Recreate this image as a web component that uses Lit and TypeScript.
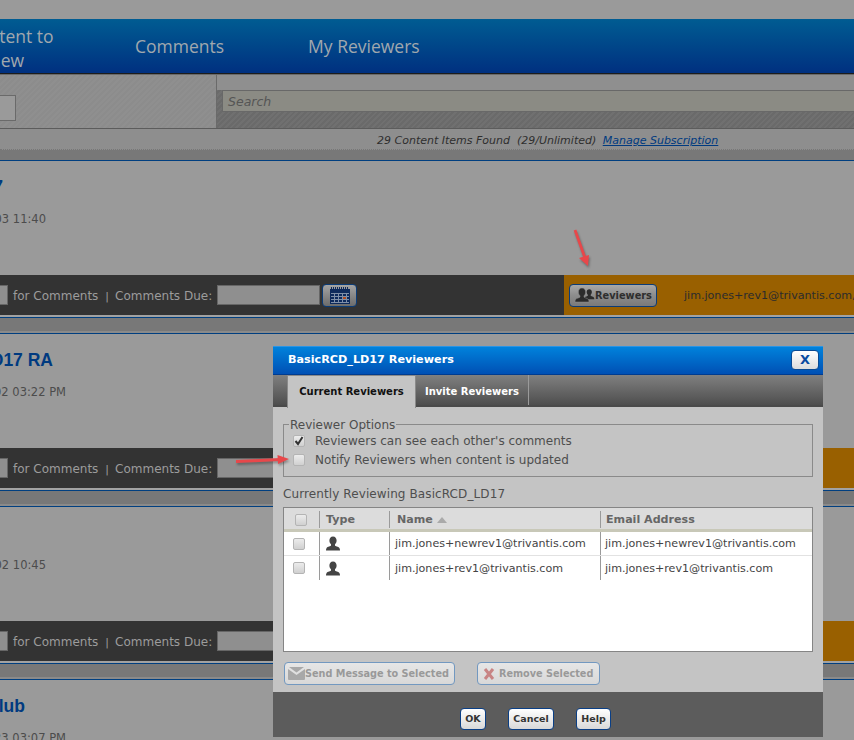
import { LitElement, html, css, svg } from "lit";
import { customElement, property } from "lit/decorators.js";

const person = svg`<path d="M8 1c2.300 0 3.600 1.800 3.600 4 0 1.700-.7 3-1.600 3.800v1.300c0 .6 3.600 1.100 4.400 2.300.5.7.6 1.600.6 2.600H1c0-1 .1-1.900.6-2.600C2.400 11.200 6 10.700 6 10.100V8.800C5.100 8 4.400 6.700 4.400 5 4.400 2.800 5.700 1 8 1z"/>`;

@customElement("rv-section")
class RvSection extends LitElement {
  @property() titleText = "";
  @property() date = "";
  @property() email = "";
  @property({ type: Boolean }) bar = true;
  static styles = css`
    :host { display: block; }
    .line { height: 1px; background: #003f80; }
    .card { height: 114px; box-sizing: border-box; padding-top: 16px; background: #9a9a9a; overflow: hidden; }
    .title { height: 20px; font: bold 17.500px/20px "Liberation Sans", sans-serif; color: #003a80; display: flex; justify-content: flex-end; white-space: nowrap; }
    .date { margin-top: 15px; height: 14px; font: 11.500px/14px "DejaVu Sans", sans-serif; color: #4c4c4c; display: flex; justify-content: flex-end; white-space: nowrap; }
    .bar { height: 40px; display: flex; background: #333; }
    .dark { width: 564px; flex: none; display: flex; align-items: center; gap: 5px; color: #9c9c9c; font: 12px "DejaVu Sans", sans-serif; white-space: nowrap; }
    .dark span { padding-top: 2px; }
    .in { height: 20px; box-sizing: border-box; background: #8f8f8f; border: 1px solid #666; flex: none; }
    .in.a { width: 8px; border-left: 0; }
    .in.b { width: 103px; }
    .sep { color: #9c9c9c; margin: 0 1px 0 2px; font-size: 11px; }
    .cal { width: 35px; height: 23px; margin-left: -3px; box-sizing: border-box; border: 1px solid #0b3c78; border-radius: 4px; background: linear-gradient(#a4a4a4, #6c6c6c); display: flex; align-items: center; justify-content: center; }
    .orange { flex: 1; background: #996000; display: flex; align-items: center; padding-left: 5px; white-space: nowrap; overflow: hidden; }
    .rbtn { width: 88px; height: 23px; box-sizing: border-box; border: 1px solid #0b3c78; border-radius: 4px; background: linear-gradient(#a8a8a8 0, #8c8c8c 50%, #7a7a7a 100%); display: flex; align-items: center; padding-left: 4px; font: bold 9.800px "DejaVu Sans", sans-serif; color: #2e2e2e; flex: none; }
    .mail { margin-left: 27px; font: 11.100px "DejaVu Sans", sans-serif; color: #2c2c2c; }
    .end { height: 2px; background: #a2a2a2; }
    .gap { height: 15px; background: #787878; box-sizing: border-box; }
    .gap i { display: block; height: 13px; }
    .gap b { display: block; height: 2px; background: #8a8a8a; }
  `;
  render() {
    return html`
      <div class="line"></div>
      <div class="card">
        <div class="title" style="width:${this.titleText.endsWith("RA") ? 53 : this.titleText.endsWith("lub") ? 25 : 3}px">${this.titleText}</div>
        <div class="date" style="width:${this.date.endsWith("PM") ? 66 : 46}px">${this.date}</div>
      </div>
      ${this.bar ? html`
      <div class="bar">
        <div class="dark">
          <div class="in a"></div><span>for Comments</span><span class="sep">|</span><span>Comments Due:</span><div class="in b"></div>
          <div class="cal"><svg width="22" height="17" viewBox="0 0 22 17"><path fill="#0e2a5c" d="M1 2h20v15H1z"/><path fill="#0e2a5c" d="M2 0h1v2H2zm2 0h1v2H4zm2 0h1v2H6zm2 0h1v2H8zm2 0h1v2h-1zm2 0h1v2h-1zm2 0h1v2h-1zm2 0h1v2h-1zm2 0h1v2h-1z"/><path fill="#7f8fa8" d="M2 6h18v1H2zm0 3h18v1H2zm0 3h18v1H2zm0 3h18v1H2zM5 6h1v10H5zm4 0h1v10H9zm4 0h1v10h-1zm4 0h1v10h-1z"/><path fill="#b04a20" d="M14 10h3v2h-3z"/></svg></div>
        </div>
        <div class="orange">
          <div class="rbtn"><svg width="21" height="17" viewBox="0 0 21 17" fill="#2b2b2b"><g transform="translate(9.500 1.500) scale(.72)">${person}</g><g stroke="#8c8c8c" stroke-width=".5">${person}</g></svg>Reviewers</div>
          ${this.email ? html`<span class="mail">${this.email}</span>` : ""}
        </div>
      </div>
      <div class="end"></div>
      <div class="line"></div>
      <div class="gap"><i></i><b></b></div>` : ""}
    `;
  }
}

@customElement("app-root")
class AppRoot extends LitElement {
  static styles = css`
    :host { display: block; width: 854px; height: 740px; position: relative; overflow: hidden; background: #9a9a9a; font-family: "DejaVu Sans", sans-serif; }
    .top { height: 19px; }
    .nav { height: 54px; box-sizing: content-box; background: linear-gradient(#005c92, #003080); border-bottom: 1px solid #1c1c1c; display: flex; align-items: center; color: #a0a8ae; font: 17.500px "Open Sans", sans-serif; white-space: nowrap; }
    .nav .first { width: 92px; margin: 4px 0 0 -33px; line-height: 24px; white-space: normal; flex: none; }
    .nav .c { margin: -1px 0 0 76px; }
    .nav .m { margin: -1px 0 0 84px; }
    .tools { height: 55px; display: flex; border-top: 1px solid #6a6a6a; border-bottom: 1px solid #5c5c5c; box-sizing: border-box; }
    .tl { width: 217px; box-sizing: border-box; border-right: 1px solid #6a6a6a; display: flex; align-items: flex-end; padding-bottom: 7px; background: repeating-linear-gradient(135deg, #8c8c8c 0 2px, #8f8f8f 2px 4px); }
    .tl div { width: 16px; height: 26px; box-sizing: border-box; background: #9a9a9a; border: 1px solid #6a6a6a; border-left: 0; }
    .tr { flex: 1; padding: 15px 0 0 5px; background: linear-gradient(#8f8f8f 0, #8f8f8f 15px, transparent 15px), repeating-linear-gradient(135deg, #6a6a6a 0 2px, #707070 2px 4px); }
    .search { height: 22px; box-sizing: border-box; border: 1px solid #686868; border-right: 0; background: #8b8b84; font: italic 12.500px/21px "DejaVu Sans", sans-serif; color: #555; padding-left: 5px; }
    .found { height: 21px; box-sizing: border-box; background: #8e8e8e; border-bottom: 1px dotted #777; padding-left: 377px; font: italic 11px/24px "DejaVu Sans", sans-serif; color: #2e2e2e; white-space: pre; }
    .found a { color: #003a80; text-decoration: underline; margin-left: 3px; }
    .gray { height: 10px; background: #787878; }

    .arrow { position: absolute; filter: drop-shadow(1px 2px 1px rgba(0,0,0,.3)); }
    .modal { position: absolute; left: 273px; top: 346px; width: 550px; height: 391px; display: flex; flex-direction: column; background: #c4c4c4; }
    .mh { height: 29px; flex: none; box-sizing: border-box; border-top: 1px solid #2b94e4; border-bottom: 1px solid #003c90; background: linear-gradient(#0082dc, #0050b4); display: flex; align-items: center; justify-content: space-between; padding: 0 4px 1px 15px; font: bold 11.200px "DejaVu Sans", sans-serif; color: #fff; }
    .mh span { padding-bottom: 1px; }
    .x { width: 28px; height: 20px; box-sizing: border-box; border: 1px solid #0a4a94; border-radius: 4px; background: linear-gradient(#fff, #dcdcdc); color: #0a4aa0; font: bold 13px/18px "DejaVu Sans", sans-serif; text-align: center; }
    .tabs { height: 32px; flex: none; box-sizing: border-box; border-bottom: 2px solid #4a4a4a; background: linear-gradient(#808080, #4e4e4e); padding-left: 14px; display: flex; font: bold 10px "DejaVu Sans", sans-serif; white-space: nowrap; }
    .tab { display: flex; align-items: center; justify-content: center; box-sizing: border-box; }
    .tab.on { width: 129px; height: 33px; background: #c4c4c4; color: #111; border: 1px solid #8a8a8a; border-width: 1px 1px 0 1px; flex: none; padding-bottom: 2px; }
    .tab.off { width: 113px; color: #fff; border-right: 1px solid #9a9a9a; height: 30px; padding-top: 2px; }
    .body { flex: 1; padding: 10px 10px 0; display: flex; flex-direction: column; color: #4e4e4e; font-size: 12px; }
    fieldset { margin: 0; padding: 0 0 0 9px; border: 1px solid #8a8a8a; height: 60px; box-sizing: border-box; }
    legend { padding: 2px 1px 0 1px; margin-left: -4px; line-height: 12px; font-size: 12px; }
    .opt { display: flex; align-items: center; gap: 10px; height: 19px; }
    .cb { width: 12px; height: 12px; box-sizing: border-box; flex: none; border: 1px solid #b4b4b4; border-radius: 2px; background: linear-gradient(#ececec, #d0d0d0); display: flex; align-items: center; justify-content: center; }
    .cap { margin-top: 10px; height: 14px; line-height: 14px; letter-spacing: .1px; }
    .grid { margin-top: 6px; height: 145px; flex: none; box-sizing: border-box; border: 1px solid #858585; background: #fff; }
    .row { display: grid; grid-template-columns: 36px 70px 211px 1fr; }
    .row.head { height: 24px; box-sizing: border-box; background: #dcdcdc; border-bottom: 3px solid #c8c8b8; font: bold 11.100px "DejaVu Sans", sans-serif; color: #666; }
    .row.data { height: 24px; box-sizing: border-box; border-bottom: 1px solid #e2e2e2; font-size: 11.100px; color: #444; }
    .row.data:last-child { border-bottom: 0; }
    .cell { display: flex; align-items: center; border-right: 1px solid #9a9a9a; padding-left: 5px; box-sizing: border-box; white-space: nowrap; overflow: hidden; }
    .cell:last-child { border-right: 0; padding-left: 4px; }
    .head .cell { margin: 3px 0 1px; padding-left: 6px; }
    .head .cell:last-child { padding-left: 5px; }
    .cell.ck { padding-left: 10px; }
    .head .cell.ck { padding-left: 11px; }
    .head .cell.nm { padding-left: 7px; gap: 4px; }
    .tri { width: 0; height: 0; border: 5px solid transparent; border-top: 0; border-bottom: 6px solid #aaa; }
    .acts { margin-top: 10px; display: flex; gap: 22px; padding-left: 1px; }
    .act { height: 23px; box-sizing: border-box; border: 1px solid #7298c0; border-radius: 4px; background: linear-gradient(#e6e6e6, #d8d8d8); color: #999; font: bold 9.700px "DejaVu Sans", sans-serif; display: flex; align-items: center; white-space: nowrap; }
    .act.s { width: 171px; padding-left: 3px; }
    .act.r { width: 123px; padding-left: 5px; gap: 4px; }
    .foot { height: 45px; flex: none; background: #5c5c5c; display: flex; padding: 16px 0 0 187px; gap: 22px; box-sizing: border-box; }
    .fb { height: 22px; box-sizing: border-box; border: 1px solid #0a3f86; border-radius: 4px; background: linear-gradient(#fff, #d8d8d8); color: #333; font: bold 9.500px/20px "DejaVu Sans", sans-serif; text-align: center; }
  `;
  render() {
    return html`
      <div class="top"></div>
      <div class="nav"><div class="first">Content to Review</div><span class="c">Comments</span><span class="m">My Reviewers</span></div>
      <div class="tools">
        <div class="tl"><div></div></div>
        <div class="tr"><div class="search">Search</div></div>
      </div>
      <div class="found">29 Content Items Found  (29/Unlimited) <a>Manage Subscription</a></div>
      <div class="gray"></div>
      <rv-section titleText="BasicRCD_LD17" date="2017-03 11:40" email="jim.jones+rev1@trivantis.com,"></rv-section>
      <rv-section titleText="BasicRCD_LD17 RA" date="2017-02 03:22 PM"></rv-section>
      <rv-section titleText="" date="2017-02 10:45"></rv-section>
      <rv-section titleText="Club" date="2017-23 03:07 PM" .bar=${false}></rv-section>

      <svg class="arrow" style="left:568px;top:226px" width="28" height="46" viewBox="0 0 28 46">
        <path d="M7 4l10 28" stroke="#e8474a" stroke-width="2.800" fill="none"/>
        <path d="M20 40l-9-8 10-3z" fill="#e8474a"/>
      </svg>
      <div class="modal">
        <div class="mh"><span>BasicRCD_LD17 Reviewers</span><div class="x">X</div></div>
        <div class="tabs"><div class="tab on">Current Reviewers</div><div class="tab off">Invite Reviewers</div></div>
        <div class="body">
          <fieldset>
            <legend>Reviewer Options</legend>
            <div class="opt"><div class="cb"><svg width="10" height="10" viewBox="0 0 10 10"><path d="M1.500 5l2.500 3 4.500-7" stroke="#333" stroke-width="2" fill="none"/></svg></div>Reviewers can see each other's comments</div>
            <div class="opt"><div class="cb"></div>Notify Reviewers when content is updated</div>
          </fieldset>
          <div class="cap">Currently Reviewing BasicRCD_LD17</div>
          <div class="grid">
            <div class="row head"><div class="cell ck"><div class="cb"></div></div><div class="cell">Type</div><div class="cell nm">Name <span class="tri"></span></div><div class="cell">Email Address</div></div>
            ${["jim.jones+newrev1@trivantis.com", "jim.jones+rev1@trivantis.com"].map((m) => html`
              <div class="row data"><div class="cell ck" style="padding-left:9px"><div class="cb"></div></div><div class="cell"><svg width="16" height="17" viewBox="0 0 16 16" fill="#444">${person}</svg></div><div class="cell">${m}</div><div class="cell">${m}</div></div>`)}
          </div>
          <div class="acts">
            <div class="act s"><svg width="17" height="13" viewBox="0 0 17 13"><path fill="#a8a8a8" d="M0 2l8.500 6L17 2v10a1 1 0 0 1-1 1H1a1 1 0 0 1-1-1z"/><path fill="#a8a8a8" d="M1 0h15l-7.500 5.500z"/></svg>Send Message to Selected</div>
            <div class="act r"><svg width="12" height="12" viewBox="0 0 12 12"><path d="M2 1l8 10M10 1L2 11" stroke="#c88484" stroke-width="3" fill="none"/></svg>Remove Selected</div>
          </div>
        </div>
        <div class="foot"><div class="fb" style="width:26px">OK</div><div class="fb" style="width:46px">Cancel</div><div class="fb" style="width:35px">Help</div></div>
      </div>
      <svg class="arrow" style="left:234px;top:452px" width="58" height="16" viewBox="0 0 58 16">
        <path d="M2 9.500l44-2" stroke="#e8474a" stroke-width="3" fill="none"/>
        <path d="M55 7l-11 5-.5-9z" fill="#e8474a"/>
      </svg>
    `;
  }
}
